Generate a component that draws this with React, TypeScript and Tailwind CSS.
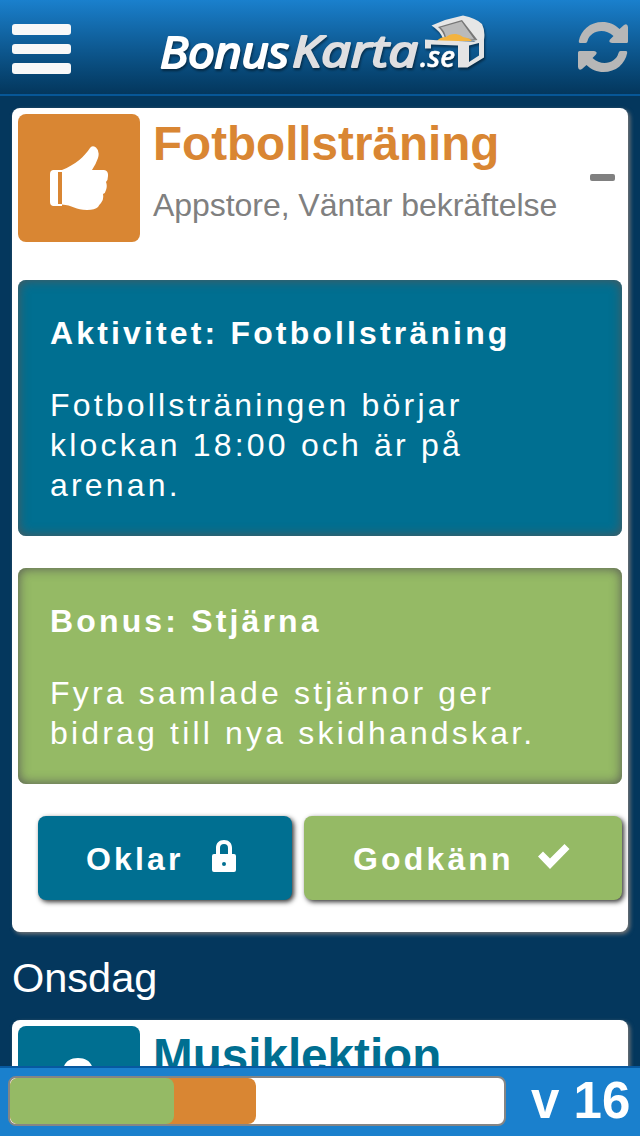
import React from 'react';

interface Panel {
  title: string;
  text: string;
  color: string;
}

const panels: Panel[] = [
  {
    title: 'Aktivitet: Fotbollsträning',
    text: 'Fotbollsträningen börjar klockan 18:00 och är på arenan.',
    color: 'bg-[#006f91]',
  },
  {
    title: 'Bonus: Stjärna',
    text: 'Fyra samlade stjärnor ger bidrag till nya skidhandskar.',
    color: 'bg-[#95ba65]',
  },
];

const Logo = () => (
  <svg
    width="340"
    height="94"
    viewBox="152 0 340 94"
    className="drop-shadow-[1px_2px_1px_rgba(0,0,0,0.45)]"
  >
    <g
      fontFamily="'Open Sans', 'Noto Sans', sans-serif"
      fontStyle="italic"
      fontWeight="400"
      strokeLinejoin="round"
      strokeLinecap="round"
      strokeWidth="2.2"
    >
      <text
        x="160"
        y="67.5"
        fontSize="43"
        textLength="129"
        lengthAdjust="spacingAndGlyphs"
        fill="#ffffff"
        stroke="#ffffff"
      >
        Bonus
      </text>
      <text
        x="292"
        y="67"
        fontSize="43"
        textLength="126"
        lengthAdjust="spacingAndGlyphs"
        fill="#dfdfe1"
        stroke="#dfdfe1"
      >
        Karta
      </text>
    </g>
    {/* lid */}
    <path
      d="M431.500 25.500L445 20L463 15.500Q476 18 482 24Q485.500 31 484 40L478 41L443 38.500Q440 31 431.500 25.500Z"
      fill="#e6e6e6"
    />
    <path d="M438 27L462 20L477.500 40L445 38.500Q443 31 438 27Z" fill="#777777" />
    <path d="M440.500 27.500L461.500 21.500L474 39L446 38Q445 31 440.500 27.500Z" fill="#bababa" />
    <path
      d="M437 41Q440 37 446 37Q450 33.500 456 34Q460 34.500 463 37Q470 38 472 41Z"
      fill="#f3b33f"
    />
    {/* box */}
    <path
      fillRule="evenodd"
      d="M425 39.500L441 40.500L474 41.500L484 38.500V57.500L467.500 67.500H458V45.500L431 44.500V48.500H425ZM469 45.500V62L479 55.500V43Z"
      fill="#e4e4e4"
    />
    <text
      x="420"
      y="67"
      fontSize="28"
      fontFamily="'Open Sans', 'Noto Sans', sans-serif"
      fontStyle="italic"
      fontWeight="600"
      textLength="35"
      lengthAdjust="spacingAndGlyphs"
      fill="#ffffff"
      stroke="#ffffff"
      strokeWidth="0.5"
    >
      .se
    </text>
  </svg>
);

const RefreshIcon = () => (
  <svg width="50" height="50" viewBox="0 0 50 50" fill="#b7b7b7">
    <path
      id="arrow"
      d="M2 21Q.5 21 .8 19C3 8 12 0 24.500 0C31 0 37 2.500 41.500 7L46 3Q49.500 1 50 5V19.500Q50 21 48.500 21H34Q30 20.500 32 17.500L35.500 14C26 5 12 9 9.500 19Q9 21 7.500 21Z"
    />
    <use href="#arrow" transform="rotate(180 25 25)" />
  </svg>
);

const ThumbIcon = () => (
  <svg width="60" height="66" viewBox="0 0 60 66" fill="#ffffff">
    <path
      fillRule="evenodd"
      d="M3 24H12C25 19 35 10 40 2Q42-1 46 1.500Q50 5 48 12Q46 18 42 24H54Q58.500 24.500 58 30Q58 34 56 36Q57.500 40 56 44Q55.500 47 53 48Q54 54 51 57Q49 59 48 61Q45 64 37 64C26 64 22 59 12 58.500V60H3Q0 59.500 0 56V28Q0 24.500 3 24ZM8 26V58H12V26Z"
    />
  </svg>
);

const PersonIcon = () => (
  <svg width="60" height="66" viewBox="0 0 60 66" fill="#ffffff">
    <path d="M28 0C38 0 43 6 43 14C43 25 36 32 28 32S13 25 13 14C13 6 18 0 28 0ZM0 64C0 42 10 37 28 37S56 42 56 64Z" />
  </svg>
);

const LockIcon = () => (
  <svg width="24" height="32" viewBox="0 0 24 32" fill="#ffffff">
    <path
      fillRule="evenodd"
      d="M4 14V8C4 3 7 0 12 0S20 3 20 8V14H22Q24 14 24 16V30Q24 32 22 32H2Q0 32 0 30V16Q0 14 2 14ZM8 14H16V8Q16 4 12 4T8 8ZM12 22A2 2 0 1 0 12 26A2 2 0 1 0 12 22Z"
    />
  </svg>
);

const CheckIcon = () => (
  <svg width="32" height="26" viewBox="0 0 32 26" fill="#ffffff">
    <path d="M0 12.500L5 7.500L12 14.500L26.500 0L31.500 5L12 25Z" />
  </svg>
);

const App = () => {
  return (
    <div className="flex h-screen w-full flex-col overflow-hidden bg-[#04375d] font-['Liberation_Sans',Arial,sans-serif]">
      <header className="flex h-24 shrink-0 border-b-2 border-[#075797] bg-linear-to-b from-[#1a80cd] to-[#04375d] pl-3">
        <div className="mt-6 flex w-[58.5px] flex-col gap-[9px]">
          <div className="h-[10.5px] rounded-[3px] bg-[#f8f8f8]"></div>
          <div className="h-[10.5px] rounded-[3px] bg-[#f8f8f8]"></div>
          <div className="h-[10.5px] rounded-[3px] bg-[#f8f8f8]"></div>
        </div>
        <div className="ml-[81.5px]">
          <Logo />
        </div>
        <div className="mt-[22px] mr-3 ml-auto">
          <RefreshIcon />
        </div>
      </header>

      <main className="min-h-0 flex-1 overflow-hidden px-3 pt-3">
        <div className="h-[824px] rounded-lg bg-white p-1.5 shadow-[2px_2px_4px_#777]">
          <div className="flex h-[166px]">
            <div className="flex h-32 w-[122px] shrink-0 rounded-lg bg-[#d98633] pt-8 pl-8">
              <ThumbIcon />
            </div>
            <div className="ml-[13px] flex-1 whitespace-nowrap">
              <h2 className="mt-[3px] text-[47.6px] leading-[54px] font-bold text-[#d98633]">
                Fotbollsträning
              </h2>
              <p className="mt-4 text-[32px] leading-9 tracking-[-0.05px] text-[#808080]">
                Appstore, Väntar bekräftelse
              </p>
            </div>
            <div className="mt-[59.5px] mr-[7px] h-[7.5px] w-[25px] rounded-[2px] bg-[#808080]"></div>
          </div>

          <div className="flex flex-col gap-8">
            {panels.map((panel) => (
              <div
                key={panel.title}
                className={`${panel.color} rounded-lg px-8 pt-[33px] pb-[31px] text-[32px] leading-10 text-white shadow-[inset_0_0_12px_#555]`}
              >
                <h3 className="font-bold tracking-[3.15px] whitespace-nowrap">
                  {panel.title}
                </h3>
                <p className="mt-8 tracking-[3.18px]">{panel.text}</p>
              </div>
            ))}
          </div>

          <div className="mt-8 ml-5 flex gap-3 text-[32px] font-bold tracking-[3.15px] text-white">
            <button className="flex h-[84px] w-[254px] items-center rounded-lg bg-[#006f91] pl-12 shadow-[2px_2px_5px_#333]">
              <span className="w-[126px] pt-0.5 text-left">Oklar</span>
              <span className="-mt-1">
                <LockIcon />
              </span>
            </button>
            <button className="flex h-[84px] w-[318px] items-center rounded-lg bg-[#95ba65] pl-[49px] shadow-[2px_2px_5px_#333]">
              <span className="w-[185px] pt-0.5 text-left">Godkänn</span>
              <span className="-mt-0.5">
                <CheckIcon />
              </span>
            </button>
          </div>
        </div>

        <h1 className="mt-[22px] mb-[18px] text-[41.5px] leading-12 text-white">
          Onsdag
        </h1>

        <div className="h-[200px] rounded-lg bg-white p-1.5 shadow-[2px_2px_4px_#777]">
          <div className="flex">
            <div className="flex h-32 w-[122px] shrink-0 rounded-lg bg-[#006f91] pt-8 pl-8">
              <PersonIcon />
            </div>
            <h2 className="mt-[3px] ml-[13px] text-[47.6px] leading-[54px] font-bold text-[#006f91]">
              Musiklektion
            </h2>
          </div>
        </div>
      </main>

      <footer className="flex h-[70px] shrink-0 border-t-2 border-[#0759a0] bg-[#1a80cd] pt-2 pl-2">
        <div className="h-[50px] w-[498px] overflow-hidden rounded-lg border-2 border-[#858585] bg-white">
          <div className="h-full w-[246px] rounded-lg bg-[#d98633]">
            <div className="h-full w-[164px] rounded-lg bg-[#95ba65]"></div>
          </div>
        </div>
        <div className="ml-[25px] text-[51px] leading-[50px] font-bold whitespace-nowrap text-white">
          v 16
        </div>
      </footer>
    </div>
  );
};

export default App;
